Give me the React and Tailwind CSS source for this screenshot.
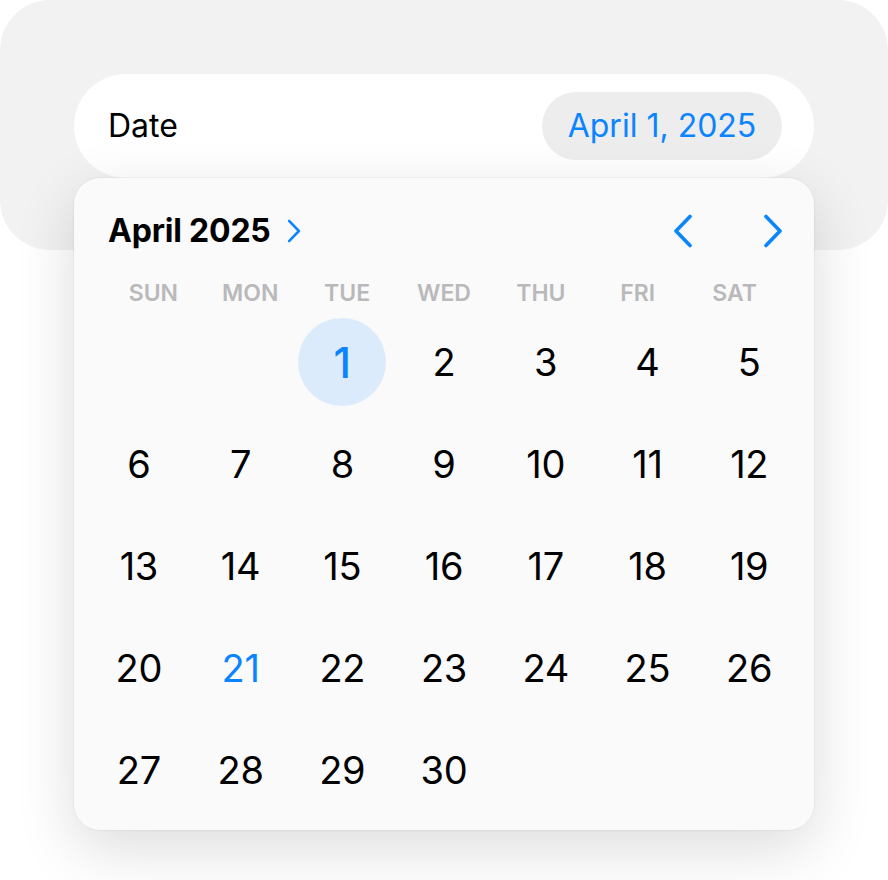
import React from 'react';

const weekdays = ['SUN', 'MON', 'TUE', 'WED', 'THU', 'FRI', 'SAT'];

// April 2025 starts on a Tuesday
const buildDays = () => {
    const cells = [null, null];
    for (let d = 1; d <= 30; d++) cells.push(d);
    return cells;
};

const Chevron = ({ dir = 'right', className = '' }) => (
    <svg viewBox="0 0 20 34" className={className} fill="none" stroke="currentColor" strokeWidth="3.6" strokeLinecap="round" strokeLinejoin="round">
        {dir === 'right' ? <path d="M3 2.5 L17 17 L3 31.5" /> : <path d="M17 2.5 L3 17 L17 31.5" />}
    </svg>
);

const DayCell = ({ day, selected, today }) => {
    if (!day) return <div className="h-[102px]" />;
    return (
        <div className="h-[102px] flex items-center justify-center">
            {selected ? (
                <div className="w-[88px] h-[88px] rounded-full bg-[#dcebfb] flex items-center justify-center text-[42px] font-medium text-[#0a84ff]">
                    {day}
                </div>
            ) : (
                <span className={`text-[38px] tracking-[-0.3px] ${today ? 'text-[#0a84ff]' : 'text-black'}`}>{day}</span>
            )}
        </div>
    );
};

const CalendarPopover = () => {
    const days = buildDays();
    return (
        <div className="absolute top-full left-0 right-0 bg-[#fafafa] rounded-[26px] shadow-[0_0_0_1px_rgba(0,0,0,0.035),0_18px_60px_rgba(0,0,0,0.14)] pt-[33px] pb-[9px]">
            <div className="flex items-center justify-between pl-[34px] pr-[31px] h-[40px]">
                <div className="flex items-center gap-[16px]">
                    <span className="text-[32px] font-bold text-black tracking-[-0.2px]">April 2025</span>
                    <Chevron className="w-[14px] h-[24px] text-[#0a84ff]" />
                </div>
                <div className="flex items-center gap-[70px]">
                    <Chevron dir="left" className="w-[20px] h-[34px] text-[#0a84ff]" />
                    <Chevron className="w-[20px] h-[34px] text-[#0a84ff]" />
                </div>
            </div>

            <div className="grid grid-cols-7 px-[31px] mt-[24px] h-[36px] items-center">
                {weekdays.map((w) => (
                    <span key={w} className="text-center text-[23px] font-semibold text-[#b9b9bb]">{w}</span>
                ))}
            </div>

            <div className="grid grid-cols-7 px-[14px]">
                {days.map((d, i) => (
                    <DayCell key={i} day={d} selected={d === 1} today={d === 21} />
                ))}
            </div>
        </div>
    );
};

export default function App() {
    return (
        <div className="w-[888px] h-[880px] bg-white" style={{ fontFamily: 'Inter, "Noto Sans", sans-serif' }}>
            <div className="bg-[#f2f2f2] rounded-[50px] h-[250px] pt-[74px] px-[74px]">
                <div className="relative">
                    <div className="h-[104px] bg-white rounded-full flex items-center justify-between pl-[34px] pr-[32px]">
                        <span className="text-[32px] text-black">Date</span>
                        <div className="h-[68px] w-[240px] rounded-full bg-[#ededed] flex items-center justify-center text-[32px] text-[#0a84ff]">
                            April 1, 2025
                        </div>
                    </div>
                    <CalendarPopover />
                </div>
            </div>
        </div>
    );
}
